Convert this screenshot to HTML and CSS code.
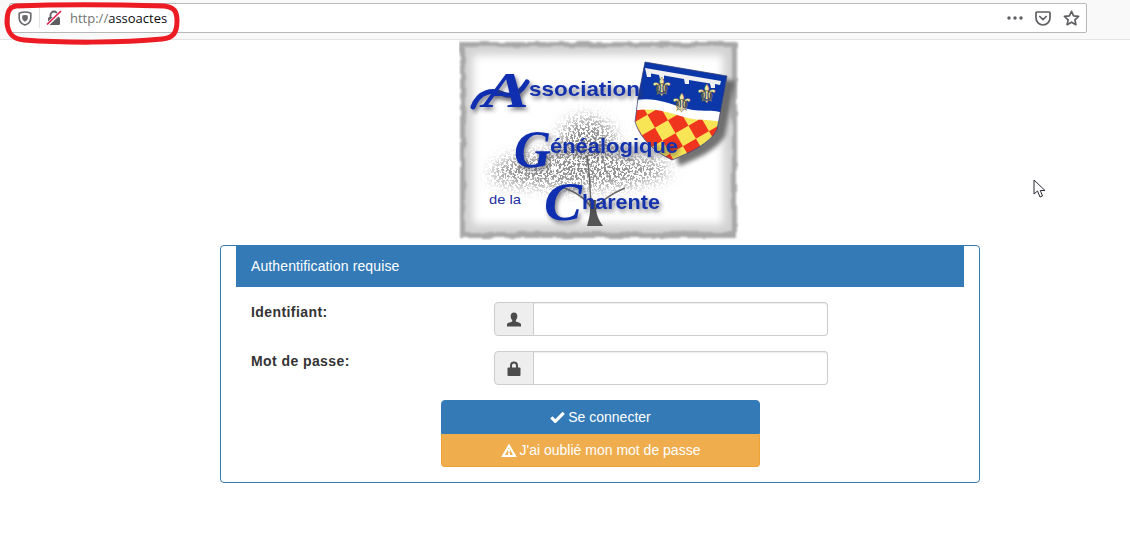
FILE: index.html
```html
<!DOCTYPE html>
<html lang="fr">
<head>
<meta charset="utf-8">
<title>Authentification requise</title>
<link rel="stylesheet" href="styles.css">
</head>
<body>
<header class="toolbar">
  <div class="urlbar">
    <span class="url-icon shield-box">
      <svg width="14" height="15" viewBox="0 0 14 15"><path d="M7 1 C5 1 3 1.500 1.200 2.300 V7 C1.200 10.500 4 13 7 14 C10 13 12.800 10.500 12.800 7 V2.300 C11 1.500 9 1 7 1Z" fill="none" stroke="#6a6a6e" stroke-width="1.600"/><path d="M7 4 C6 4 5 4.200 4.200 4.500 V7 C4.200 8.800 5.500 10 7 10.700 C8.500 10 9.800 8.800 9.800 7 V4.500 C9 4.200 8 4 7 4Z" fill="#6a6a6e"/></svg>
    </span>
    <span class="url-icon lock-box">
      <svg width="16" height="16" viewBox="0 0 16 16"><path d="M4.500 7 V5 A3.500 3.500 0 0 1 11.500 5 V7" fill="none" stroke="#5f5f63" stroke-width="1.800"/><rect x="2" y="7" width="12" height="8" rx="1.500" fill="#5f5f63"/><path d="M1 15 L15 1.500" stroke="#fff" stroke-width="3.500"/><path d="M1 14.500 L15 1" stroke="#e0204f" stroke-width="1.700"/></svg>
    </span>
    <span class="url-text"><span class="scheme">http://</span>assoactes</span>
    <span class="url-actions">
      <svg width="16" height="4" viewBox="0 0 16 4"><circle cx="2" cy="2" r="1.700"/><circle cx="8" cy="2" r="1.700"/><circle cx="14" cy="2" r="1.700"/></svg>
      <svg width="16" height="15" viewBox="0 0 16 15"><path d="M2 1 H14 A1 1 0 0 1 15 2 V7 A7 7 0 0 1 1 7 V2 A1 1 0 0 1 2 1Z" fill="none" stroke="#5f5f63" stroke-width="1.700"/><path d="M4.800 5.500 L8 8.500 L11.200 5.500" fill="none" stroke="#5f5f63" stroke-width="1.700" stroke-linecap="round"/></svg>
      <svg width="17" height="16" viewBox="0 0 17 16"><path d="M8.500 1.300 L10.600 5.800 L15.600 6.400 L11.900 9.800 L12.900 14.700 L8.500 12.200 L4.100 14.700 L5.100 9.800 L1.400 6.400 L6.400 5.800Z" fill="none" stroke="#5f5f63" stroke-width="1.700" stroke-linejoin="round"/></svg>
    </span>
  </div>
</header>

<main class="page">
  <svg class="logo" width="280" height="200" viewBox="0 0 280 200" role="img" aria-label="Association Généalogique de la Charente">
    <defs>
      <filter id="rough" x="-5%" y="-5%" width="110%" height="110%">
        <feTurbulence type="fractalNoise" baseFrequency="0.06" numOctaves="3" seed="4"/>
        <feDisplacementMap in="SourceGraphic" scale="5" xChannelSelector="R" yChannelSelector="G"/>
        <feGaussianBlur stdDeviation="1"/>
      </filter>
      <filter id="soft" x="-10%" y="-10%" width="120%" height="120%"><feGaussianBlur stdDeviation="4"/></filter>
      <filter id="shadow" x="-20%" y="-20%" width="140%" height="140%"><feGaussianBlur stdDeviation="2.200"/></filter>
      <filter id="foliage" x="-20%" y="-20%" width="140%" height="140%">
        <feGaussianBlur in="SourceGraphic" stdDeviation="8" result="mass"/>
        <feTurbulence type="fractalNoise" baseFrequency="0.42" numOctaves="3" seed="9" result="n"/>
        <feColorMatrix in="n" type="matrix" values="0 0 0 0 0.27  0 0 0 0 0.27  0 0 0 0 0.27  0 0 0 12 -5.600" result="spots"/>
        <feComposite in="spots" in2="mass" operator="in"/>
        <feGaussianBlur stdDeviation="0.3"/>
      </filter>
      <clipPath id="shield"><path d="M186 22 L268 36 L258 90 C250 104 232 112 213 120 C196 112 182 100 176 82 L179 58Z"/></clipPath>
      <pattern id="checks" width="30" height="30" patternUnits="userSpaceOnUse" patternTransform="rotate(-30 210 90) translate(4 6)">
        <rect width="30" height="30" fill="#f0351f"/>
        <rect width="15" height="15" fill="#f8e556"/>
        <rect x="15" y="15" width="15" height="15" fill="#f8e556"/>
      </pattern>
    </defs>
    <rect x="1" y="2" width="277" height="196" fill="#a8a8a8" filter="url(#rough)"/>
    <rect x="6" y="7" width="267" height="185" fill="#d2d2d2" filter="url(#rough)"/>
    <rect x="14" y="15" width="250" height="169" fill="#fff" filter="url(#soft)"/>

    <g filter="url(#foliage)">
      <ellipse cx="120" cy="130" rx="85" ry="18"/>
      <ellipse cx="128" cy="102" rx="28" ry="24"/>
      <ellipse cx="68" cy="134" rx="36" ry="11"/>
      <ellipse cx="178" cy="130" rx="32" ry="11"/>
    </g>
    <path class="branches" d="M134 172 C130 160 118 152 100 146 M136 170 C142 160 152 154 166 148 M132 165 C131 150 131 135 128 115"/>
    <path d="M128 186 C131 176 132 170 130 160 L137 160 C136 170 138 178 144 186Z" fill="#555"/>

    <path d="M192 27 L276 41 L266 96 C258 110 238 119 220 126Z" fill="#444" opacity=".75" filter="url(#shadow)"/>
    <g clip-path="url(#shield)">
      <rect x="170" y="18" width="105" height="105" fill="url(#checks)"/>
      <path d="M170 15 H275 V80 C255 68 245 76 225 70 C205 64 195 58 170 64Z" fill="#0c37a8"/>
      <path d="M170 61 C195 56 205 62 225 68 C245 74 255 66 275 78 V88 C255 76 245 83 225 77 C205 71 195 67 170 71Z" fill="#fff"/>
    </g>
    <path d="M186 28 L262 41 L261 45 L256 44 L256 48 L252 48 L251 43.500 L230 40 L230 44 L226 44 L225 39 L205 35.500 L205 39 L201 39 L200 35 L192 33.500 L192 37 L188 37Z" fill="#f1f1f1"/>
    <path d="M186 22 L268 36 L258 90 C250 104 232 112 213 120 C196 112 182 100 176 82 L179 58Z" fill="none" stroke="#30407e" stroke-width=".7"/>
    <text class="fleur" x="191" y="56" font-size="26">⚜</text>
    <text class="fleur" x="211" y="72" font-size="26">⚜</text>
    <text class="fleur" x="236" y="63" font-size="26">⚜</text>

    <path class="swash-tail" d="M14 67 C20 51 34 49 44 54 C54 58 62 52 68 42"/>
    <text class="swash" x="24" y="67" font-size="50" textLength="46" lengthAdjust="spacingAndGlyphs">A</text>
    <text class="word" x="70" y="56" textLength="111" lengthAdjust="spacingAndGlyphs" font-size="21">ssociation</text>
    <text class="swash" x="55" y="127" font-size="52" textLength="37" lengthAdjust="spacingAndGlyphs">G</text>
    <text class="word" x="91" y="113" textLength="128" lengthAdjust="spacingAndGlyphs" font-size="20">énéalogique</text>
    <text class="small-word" x="30" y="164" textLength="32" lengthAdjust="spacingAndGlyphs" font-size="13">de la</text>
    <text class="swash" x="85" y="180" font-size="54" textLength="38" lengthAdjust="spacingAndGlyphs">C</text>
    <text class="word" x="123" y="169" textLength="78" lengthAdjust="spacingAndGlyphs" font-size="20">harente</text>
  </svg>

  <section class="panel">
    <h1 class="panel-heading">Authentification requise</h1>
    <form class="panel-body">
      <div class="row">
        <label class="row-label" for="login">Identifiant:</label>
        <div class="input-group">
          <span class="addon">
            <svg width="14" height="15" viewBox="0 0 14 15"><path d="M7 .5 C9.300 .5 10.500 2.300 10.300 4.500 C10.200 6.200 9.500 7.500 8.800 8.200 V9.500 C10.500 10.300 13.500 10.800 14 12 V14.500 H0 V12 C.5 10.800 3.500 10.300 5.200 9.500 V8.200 C4.500 7.500 3.800 6.200 3.700 4.500 C3.500 2.300 4.700 .5 7 .5Z" fill="#4c4c4c"/></svg>
          </span>
          <input id="login" class="field" type="text">
        </div>
      </div>
      <div class="row">
        <label class="row-label" for="password">Mot de passe:</label>
        <div class="input-group">
          <span class="addon">
            <svg width="14" height="15" viewBox="0 0 14 15"><path d="M4 7 V4.500 A3 3 0 0 1 10 4.500 V7" fill="none" stroke="#4c4c4c" stroke-width="2"/><rect x=".5" y="6.500" width="13" height="8.500" rx="1" fill="#4c4c4c"/></svg>
          </span>
          <input id="password" class="field" type="password">
        </div>
      </div>
      <div class="actions">
        <button type="submit" class="btn btn-primary">
          <svg width="15" height="12" viewBox="0 0 15 12"><path d="M1.300 6.300 L5.300 10.300 L13.700 1.900" fill="none" stroke="#fff" stroke-width="3.200"/></svg>
          Se connecter
        </button>
        <button type="button" class="btn btn-warning">
          <svg width="16" height="14" viewBox="0 0 16 14"><path d="M8 .5 L15.800 14 H.2Z M8 4.500 L4 11.900 H12Z" fill="#fff" fill-rule="evenodd"/><path d="M7 6 H9 V9.300 H7Z M7 10 H9 V12 H7Z" fill="#fff"/></svg>
          J'ai oublié mon mot de passe
        </button>
      </div>
    </form>
  </section>
</main>

<svg class="annotation" width="180" height="46" viewBox="0 0 180 46"><path d="M14 5 C60 3 130 4 162 5 C172 6 175 10 175 20 C175 32 171 37 160 38 C120 42 60 42 22 39 C11 38 6 33 5 22 C5 11 7 6 14 5Z" fill="none" stroke="#ed1c24" stroke-width="5"/></svg>

<svg class="cursor" width="14" height="20" viewBox="0 0 14 20"><path d="M1 1 V15 L4.500 12 L7 18 L9.500 17 L7.300 11.500 L12 11.500Z" fill="#fff" stroke="#2b2b33" stroke-width="1"/></svg>
</body>
</html>
```

FILE: styles.css
```css
* { box-sizing: border-box; }

html, body { margin: 0; padding: 0; }

body {
  position: relative;
  height: 543px;
  overflow: hidden;
  background: #fff;
  color: #333;
  font-family: "Liberation Sans", Arial, sans-serif;
  font-size: 14px;
}

.toolbar {
  height: 40px;
  padding: 3px 43px 0 9px;
  background: #f9f9fa;
  border-bottom: 1px solid #e4e4e4;
}

.urlbar {
  display: flex;
  align-items: center;
  height: 30px;
  background: #fff;
  border: 1px solid #b8b8b8;
  border-radius: 2px;
}

.url-icon { display: flex; align-items: center; justify-content: center; height: 20px; }
.shield-box { width: 30px; padding-left: 1px; border-right: 1px solid #e2e2e2; }
.lock-box { width: 28px; }

.url-text {
  margin-left: 2px;
  font-family: "Open Sans", sans-serif;
  font-size: 13px;
  color: #0c0c0d;
}
.scheme { color: #737373; }

.url-actions {
  display: flex;
  align-items: center;
  gap: 12px;
  margin-left: auto;
  padding-right: 6px;
  fill: #5f5f63;
}

.page {
  display: flex;
  flex-direction: column;
  align-items: flex-start;
  padding-left: 220px;
}

.logo { display: block; margin-left: 239px; }

.panel {
  width: 760px;
  height: 238px;
  margin-top: 5px;
  padding: 0 15px;
  border: 1px solid #337ab7;
  border-radius: 4px;
}

.panel-heading {
  height: 41px;
  margin: 0;
  padding: 0 15px;
  background: #337ab7;
  color: #fff;
  font-size: 14px;
  font-weight: 400;
  letter-spacing: .12px;
  line-height: 41px;
}

.panel-body {
  display: flex;
  flex-direction: column;
  gap: 15px;
  padding-top: 15px;
}

.row { display: flex; }

.row-label {
  width: 258px;
  padding-left: 15px;
  font-weight: 700;
  letter-spacing: .42px;
  line-height: 20px;
}

.input-group { display: flex; width: 334px; height: 34px; }

.addon {
  display: flex;
  align-items: center;
  justify-content: center;
  width: 40px;
  background: #eee;
  border: 1px solid #ccc;
  border-radius: 4px 0 0 4px;
}

.field {
  flex: 1;
  min-width: 0;
  border: 1px solid #ccc;
  border-left: 0;
  border-radius: 0 4px 4px 0;
  background: #fff;
  box-shadow: inset 0 1px 1px rgba(0, 0, 0, .075);
}

.actions {
  display: flex;
  flex-direction: column;
  width: 319px;
  margin-left: 205px;
}

.btn {
  display: flex;
  align-items: center;
  justify-content: center;
  gap: 3px;
  height: 33.500px;
  padding: 0;
  border: 1px solid;
  color: #fff;
  font: inherit;
}

.btn-primary {
  background: #337ab7;
  border-color: #337ab7;
  border-radius: 4px 4px 0 0;
}

.btn-warning {
  background: #f0ad4e;
  border-color: #eea236;
  border-top-color: #f0ad4e;
  border-radius: 0 0 4px 4px;
}

.annotation { position: absolute; left: 2px; top: 1px; }

.cursor { position: absolute; left: 1033px; top: 179px; }

.swash {
  font-family: "Liberation Serif", serif;
  font-style: italic;
  font-weight: 700;
  fill: #0f2fb0;
  filter: drop-shadow(2px 3px 2px rgba(60, 60, 70, .65));
}

.swash-tail {
  fill: none;
  stroke: #0f2fb0;
  stroke-width: 5;
  stroke-linecap: round;
  filter: drop-shadow(2px 3px 2px rgba(60, 60, 70, .65));
}

.word {
  font-family: "Liberation Sans", sans-serif;
  font-weight: 700;
  fill: #1532ad;
  filter: drop-shadow(2px 3px 2px rgba(60, 60, 70, .65));
}

.small-word {
  font-family: "Liberation Sans", sans-serif;
  fill: #1c2f9e;
}

.branches {
  fill: none;
  stroke: #6a6a6a;
  stroke-width: 1.500;
}

.fleur {
  font-family: "DejaVu Sans", sans-serif;
  fill: #f3e7a8;
  stroke: #5a4a10;
  stroke-width: .3;
}
```
